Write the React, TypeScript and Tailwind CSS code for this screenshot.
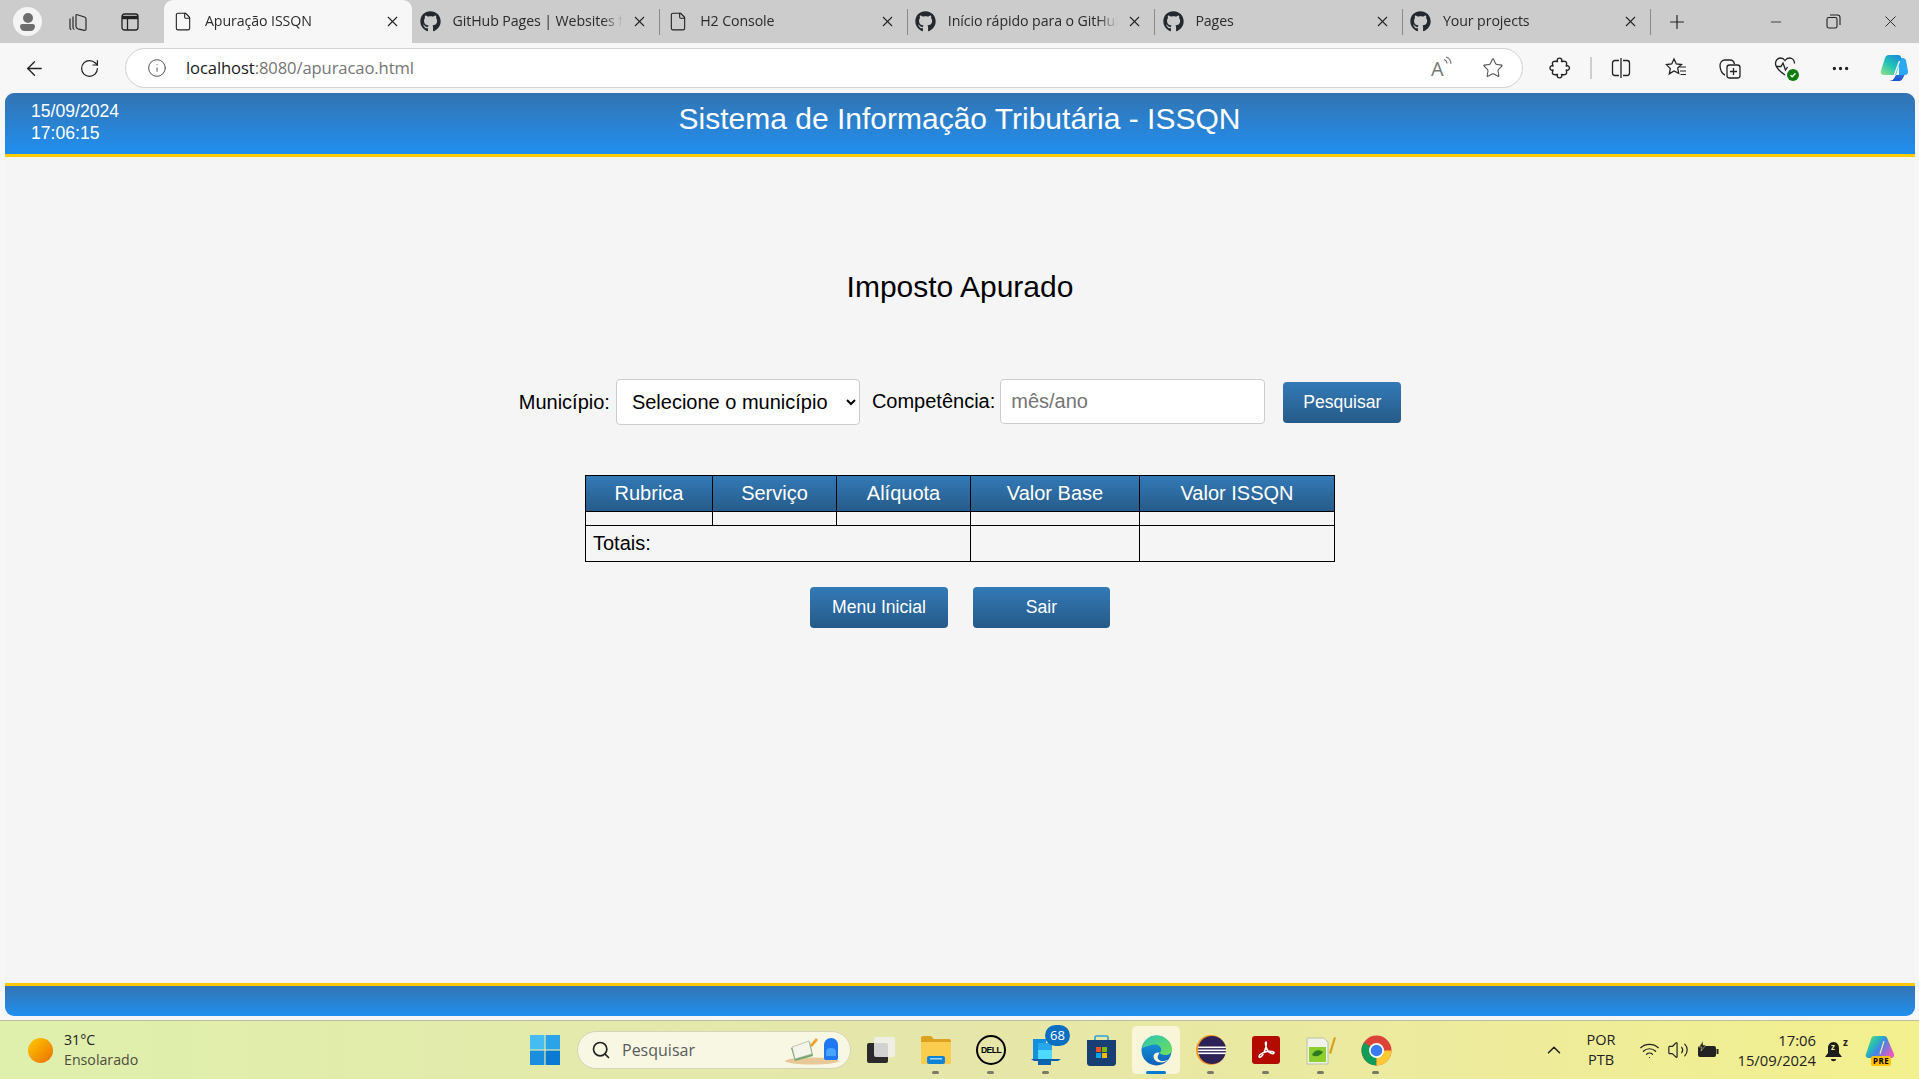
import { ArrowLeft, ChevronUp, File, Info, Minus, MoreHorizontal, Plus, RotateCw, Search, Star, Volume2, Wifi, X } from "lucide-react"
import { FaGithub } from "react-icons/fa"

const chromeFont = "font-['Open_Sans','Noto_Sans',sans-serif]"
const pageFont = "font-['Liberation_Sans',Arial,sans-serif]"

const tabs = [
    { title: "Apuração ISSQN", github: false, active: true },
    { title: "GitHub Pages | Websites for you and your projects", github: true },
    { title: "H2 Console", github: false },
    { title: "Início rápido para o GitHub Pages", github: true },
    { title: "Pages", github: true },
    { title: "Your projects", github: true },
]

function BrowserTab({ title, github, active }: { title: string; github: boolean; active?: boolean }) {
    return (
        <div className={`relative flex h-[43px] w-[247.6px] shrink-0 items-center pl-[8px] pr-[11px] ${active ? "rounded-t-[9px] bg-[#f7f7f7]" : ""}`}>
            <span className="flex w-[22px] shrink-0 justify-center">
                {github ? <FaGithub className="h-[21px] w-[21px] text-[#24292f]" /> : <File className="h-[23px] w-[20px] text-[#222]" strokeWidth={1.3} />}
            </span>
            <span className={`ml-[11px] min-w-0 flex-1 -translate-y-px overflow-hidden whitespace-nowrap text-[14.2px] leading-[18px] tracking-[-0.1px] text-[#2b2b2b] [mask-image:linear-gradient(to_right,black_88%,transparent)] ${chromeFont}`}>
                {title}
            </span>
            <X className="ml-[8px] h-[17px] w-[17px] shrink-0 text-[#222]" strokeWidth={1.5} />
            {!active && <span className="absolute right-[-1px] top-[9px] h-[26px] w-px bg-[#8a8a8a]" />}
        </div>
    )
}

function TabStrip() {
    return (
        <div className="flex h-[43px] items-center bg-[#cccccc]">
            <div className="flex w-[164px] shrink-0 items-center pl-[13px]">
                <div className="flex h-[29px] w-[29px] flex-col items-center justify-center rounded-full bg-[#f4f4f4]">
                    <span className="h-[10px] w-[10px] rounded-full bg-[#6d6d6d]" />
                    <span className="mt-[1px] h-[7px] w-[15px] rounded-b-[6px] rounded-t-[3px] bg-[#6d6d6d]" />
                </div>
                <svg className="ml-[25px] h-[22px] w-[22px]" viewBox="0 0 22 22" fill="none" stroke="#2a2a2a" strokeWidth="1.2">
                    <path d="M3 7.5v9.5c0 .8.5 1.3 1.2 1.6M6 5.5v11c0 1 .6 1.700 1.400 2M9.500 3.500l8 2.500c.8.300 1.500 1 1.500 2v10c0 1-.8 1.600-1.700 1.400l-6.400-1.600c-1-.3-1.900-1.100-1.900-2.300V4.400c0-.6.200-.9.500-.9z" />
                </svg>
                <svg className="ml-[31px] h-[20px] w-[20px]" viewBox="0 0 20 20" fill="none" stroke="#222" strokeWidth="1.3">
                    <rect x="2" y="2" width="16" height="16" rx="2.5" />
                    <path d="M2 5.5h16" strokeWidth="3.4" />
                    <path d="M7.5 6v12" />
                </svg>
            </div>
            {tabs.map((tab) => (
                <BrowserTab key={tab.title} title={tab.title} github={tab.github} active={tab.active} />
            ))}
            <Plus className="ml-[16px] h-[22px] w-[22px] text-[#222]" strokeWidth={1.3} />
            <Minus className="ml-[80px] h-[16px] w-[16px] text-[#222]" strokeWidth={1.2} />
            <svg className="ml-[42px] h-[15px] w-[15px]" viewBox="0 0 15 15" fill="none" stroke="#222" strokeWidth="1.1">
                <rect x="1" y="3.5" width="10" height="10.5" rx="1.8" />
                <path d="M4 1h7.5C13 1 14 2 14 3.500V11" />
            </svg>
            <X className="ml-[40px] h-[19px] w-[19px] text-[#222]" strokeWidth={1.15} />
        </div>
    )
}

function Toolbar() {
    return (
        <div className="flex h-[50px] items-center bg-[#f7f7f7]">
            <ArrowLeft className="ml-[23px] h-[23px] w-[23px] text-[#222]" strokeWidth={1.4} />
            <RotateCw className="ml-[33px] h-[21px] w-[21px] text-[#222]" strokeWidth={1.4} />
            <div className="ml-[25px] flex h-[40px] w-[1398px] items-center rounded-full border border-[#d2d2d2] bg-white">
                <Info className="ml-[21px] h-[20px] w-[20px] text-[#555]" strokeWidth={1.2} />
                <span className={`ml-[19px] flex-1 text-[16.6px] tracking-[-0.1px] text-[#767676] ${chromeFont}`}>
                    <span className="text-[#1a1a1a]">localhost</span>:8080/apuracao.html
                </span>
                <span className="relative mr-[28px] h-[24px] w-[24px]">
                    <span className={`absolute left-[1px] top-[2px] text-[20px] leading-[22px] text-[#777] ${chromeFont}`}>A</span>
                    <svg className="absolute left-[12px] top-0 h-[14px] w-[12px]" viewBox="0 0 12 14" fill="none" stroke="#777" strokeWidth="1.1">
                        <path d="M2 3.500c2 .8 3 2.200 3 4M4 1c3.200 1 5 3.500 5 7" />
                    </svg>
                </span>
                <Star className="mr-[18px] h-[22px] w-[22px] text-[#555]" strokeWidth={1.2} />
            </div>
            <div className="ml-[25px] flex items-center">
                <svg className="h-[24px] w-[24px]" viewBox="0 0 24 24" fill="none" stroke="#222" strokeWidth="1.4" strokeLinejoin="round">
                    <path d="M9.500 5.500C7.500 1 15.500 1 13.500 5.500C15 5.200 18 5 18.500 6.500C19 7.500 18.500 9 18.200 10C22.500 8.500 22.500 15.500 18.200 14C18.500 15 19 16.500 18.500 17.500C18 19 15 18.800 13.500 18.500C15.500 23 7.500 23 9.500 18.500C8 18.800 5 19 4.500 17.500C4 16.500 4.800 15 5 14C1 15.500 1 8.500 5 10C4.800 9 4 7.500 4.500 6.500C5 5 8 5.200 9.500 5.500z" />
                </svg>
                <span className="ml-[18px] h-[22px] w-[2px] bg-[#cfcfcf]" />
                <svg className="ml-[18px] h-[22px] w-[22px]" viewBox="0 0 22 22" fill="none" stroke="#222" strokeWidth="1.3">
                    <path d="M9 3.500H5c-1.500 0-2.500 1-2.500 2.500v10c0 1.500 1 2.500 2.500 2.500h4M13 3.500h4c1.500 0 2.500 1 2.500 2.500v10c0 1.500-1 2.500-2.500 2.500h-4M11 1v20" />
                </svg>
                <svg className="ml-[31px] h-[24px] w-[24px]" viewBox="0 0 24 24" fill="none" stroke="#222" strokeWidth="1.3">
                    <path d="M11 3l2.300 5 5.200.6-3.800 3.500 1 5.300L11 15l-4.700 2.900 1-5.300L3.500 8.600 8.700 8z" />
                    <path d="M16.500 11H23M17 15h6M17.500 18.500H23" strokeWidth="1.1" />
                </svg>
                <svg className="ml-[31px] h-[24px] w-[24px]" viewBox="0 0 24 24" fill="none" stroke="#222" strokeWidth="1.3">
                    <rect x="9" y="9" width="13" height="13" rx="2.500" />
                    <path d="M15.500 12v7M12 15.500h7" />
                    <path d="M7 19c-2-.5-3-2-4-4.500-.6-1.800-1-3.500-1-5 0-3 2-5.500 5-5.500h5c2 0 4 1.500 4.500 4" />
                </svg>
                <span className="relative ml-[32px] h-[24px] w-[24px]">
                    <svg className="h-[22px] w-[22px]" viewBox="0 0 22 22" fill="none" stroke="#222" strokeWidth="1.3">
                        <path d="M11 19C6 15.500 1.500 12 1.500 7.500 1.500 4 4 2 6.500 2 8.500 2 10 3 11 4.500 12 3 13.500 2 15.500 2 18 2 20.500 4 20.500 7.500" />
                        <path d="M2 10.500h5l2-3.500 2.500 7 2-3" />
                    </svg>
                    <span className="absolute bottom-[-1px] right-[-1px] flex h-[12px] w-[12px] items-center justify-center rounded-full bg-[#107c10]">
                        <svg className="h-[8px] w-[8px]" viewBox="0 0 8 8" fill="none" stroke="#fff" strokeWidth="1.3"><path d="M1.500 4.200l1.700 1.600L6.500 2.300" /></svg>
                    </span>
                </span>
                <MoreHorizontal className="ml-[32px] h-[21px] w-[21px] text-[#222]" strokeWidth={1.8} />
                <svg className="ml-[28px] h-[30px] w-[30px]" viewBox="0 0 30 30">
                    <defs>
                        <linearGradient id="cpA" x1="0.8" y1="0" x2="0.1" y2="1"><stop offset="0" stopColor="#1a8fd8" /><stop offset=".5" stopColor="#22c4b4" /><stop offset="1" stopColor="#8fe08a" /></linearGradient>
                        <linearGradient id="cpB" x1="0" y1="0" x2="0" y2="1"><stop offset="0" stopColor="#2a6fd8" /><stop offset="1" stopColor="#1b4fd0" /></linearGradient>
                    </defs>
                    <path d="M20 5h4c1.500 0 2.500 1 3 2.500L29 18c.5 2-.8 4-3 4h-6z" fill="#2aa8f0" />
                    <path d="M10 2h9c2.500 0 3.500 2 3 4l-5 16H5c-2.500 0-4-2-3-4.500L6 5c.6-2 2-3 4-3z" fill="url(#cpA)" />
                    <path d="M10 28h10c2.500 0 3.500-2 4.500-4l1-2H17l-2 3.500c-1 1.500-2.500 2.500-5 2.500z" fill="url(#cpB)" />
                    <path d="M20.500 8L15 23" stroke="#f7f7f7" strokeWidth="1.400" fill="none" />
                </svg>
            </div>
        </div>
    )
}

function BlueBar({ children, top }: { children?: React.ReactNode; top?: boolean }) {
    return (
        <div className={`flex bg-gradient-to-b from-[#3174b2] to-[#1e8ff0] ${top ? "h-[64px] rounded-t-[9px] border-b-[3px] border-[#ffcc00]" : "h-[33px] rounded-b-[9px] border-t-[3px] border-[#ffc800]"}`}>
            {children}
        </div>
    )
}

function ActionButton({ label, width }: { label: string; width: string }) {
    return (
        <button className={`h-[41px] rounded-[4px] bg-gradient-to-b from-[#337ab7] to-[#265a88] text-[17.6px] text-white ${width}`}>
            {label}
        </button>
    )
}

function Page() {
    const heads = [
        { label: "Rubrica", width: "w-[127px]" },
        { label: "Serviço", width: "w-[124px]" },
        { label: "Alíquota", width: "w-[134px]" },
        { label: "Valor Base", width: "w-[169px]" },
        { label: "Valor ISSQN", width: "w-[195px]" },
    ]

    return (
        <div className={`flex flex-1 flex-col bg-[#f7f7f7] pb-[4px] pl-[5px] pr-[4px] ${pageFont}`}>
            <div className="flex flex-1 flex-col bg-[#f5f5f5]">
                <BlueBar top>
                    <div className="w-[459px] shrink-0 pl-[26px] pt-[8px] text-[17.6px] leading-[21.5px] text-white">
                        <div>15/09/2024</div>
                        <div>17:06:15</div>
                    </div>
                    <div className="w-[991px] pt-[6px] text-center text-[30px] leading-[40px] text-white">
                        Sistema de Informação Tributária - ISSQN
                    </div>
                </BlueBar>

                <main className="flex flex-1 flex-col items-center">
                    <h1 className="mt-[110px] text-[30px] leading-[40px] text-black">Imposto Apurado</h1>

                    <div className="mt-[72px] flex items-center text-[20px] text-black">
                        <label>Município:</label>
                        <select className="ml-[6px] h-[46px] w-[244px] rounded-[4px] border border-[#cccccc] bg-white pl-[11px] text-[20px]">
                            <option>Selecione o município</option>
                        </select>
                        <label className="ml-[12px] -translate-y-px">Competência:</label>
                        <input
                            placeholder="mês/ano"
                            className="ml-[5px] h-[45px] w-[265px] -translate-y-px rounded-[4px] border border-[#cccccc] bg-white px-[10px] text-[20px] placeholder:text-[#757575]"
                        />
                        <span className="ml-[18px]"><ActionButton label="Pesquisar" width="w-[118px]" /></span>
                    </div>

                    <table className="mt-[50px] w-[749px] table-fixed border-collapse border border-black text-[20px] leading-[26px] text-black">
                        <thead>
                            <tr className="h-[36px] bg-gradient-to-b from-[#337ab7] to-[#265a88] text-white">
                                {heads.map((h) => (
                                    <th key={h.label} className={`border border-black pb-[2px] font-normal ${h.width}`}>{h.label}</th>
                                ))}
                            </tr>
                        </thead>
                        <tbody>
                            <tr className="h-[14px]">
                                <td className="border border-black" />
                                <td className="border border-black" />
                                <td className="border border-black" />
                                <td className="border border-black" />
                                <td className="border border-black" />
                            </tr>
                            <tr className="h-[36px]">
                                <td colSpan={3} className="border border-black px-[7px] pb-[2px]">Totais:</td>
                                <td className="border border-black" />
                                <td className="border border-black" />
                            </tr>
                        </tbody>
                    </table>

                    <div className="mt-[25px] flex gap-[25px]">
                        <ActionButton label="Menu Inicial" width="w-[138px]" />
                        <ActionButton label="Sair" width="w-[137px]" />
                    </div>
                </main>

                <BlueBar />
            </div>
        </div>
    )
}

function TaskIcon({ children, running, active }: { children: React.ReactNode; running?: boolean; active?: boolean }) {
    return (
        <div className={`relative flex h-[48px] w-[48px] items-center justify-center rounded-[5px] ${active ? "bg-[#f8f5d8]" : ""}`}>
            {children}
            {running && <span className="absolute bottom-[0px] left-[20px] h-[3px] w-[7px] rounded-full bg-[#7a7a6a]" />}
            {active && <span className="absolute bottom-[0px] left-[14px] h-[3px] w-[20px] rounded-full bg-[#0b78d4]" />}
        </div>
    )
}

function Taskbar() {
    return (
        <div className={`flex h-[59px] items-center border-t border-[#bdbda0] bg-gradient-to-r from-[#dff0ac] via-[#e6e6aa] to-[#f3f08e] ${chromeFont}`}>
            <div className="flex w-[530px] shrink-0 items-center pl-[28px]">
                <span className="h-[25px] w-[25px] rounded-full bg-gradient-to-br from-[#ffcc00] to-[#e86c00]" />
                <div className="ml-[11px] text-[14.200px] leading-[20px]">
                    <div className="text-[#222]">31°C</div>
                    <div className="text-[#4c4c3c]">Ensolarado</div>
                </div>
            </div>

            <svg className="h-[30px] w-[30px] shrink-0" viewBox="0 0 30 30">
                <rect x="0" y="0" width="14.400" height="14.400" fill="#45bdf2" />
                <rect x="15.600" y="0" width="14.400" height="14.400" fill="#2ba3e8" />
                <rect x="0" y="15.600" width="14.400" height="14.400" fill="#1a8fe0" />
                <rect x="15.600" y="15.600" width="14.400" height="14.400" fill="#0a7ad2" />
            </svg>

            <div className="ml-[17px] flex h-[38px] w-[274px] shrink-0 items-center rounded-full border border-[#d4d4b8] bg-[#f8f7e4] pl-[13px]">
                <Search className="h-[20px] w-[20px] text-[#222]" strokeWidth={2} />
                <span className="ml-[11px] flex-1 text-[16px] text-[#5a5a5a]">Pesquisar</span>
                <svg className="mr-[8px] h-[32px] w-[58px]" viewBox="0 0 58 32">
                    <ellipse cx="28" cy="27" rx="27" ry="3.500" fill="#e8c898" />
                    <path d="M7 14l19-6 3 14-18 5z" fill="#6fa86a" />
                    <path d="M8 13l17-6 3 13-17 5z" fill="#f4f4ea" stroke="#9aa58c" strokeWidth=".6" />
                    <path d="M26 11l6-7 2 2-6 7z" fill="#f0a030" />
                    <path d="M40 24V11c0-4 3-7 7-7s7 3 7 7v13c0 1.500-1 2-2 2H42c-1 0-2-.5-2-2z" fill="#1f78f0" />
                    <path d="M42 19c0-4 2-5 5-5s5 1 5 5v3H42z" fill="#4aa4ff" />
                </svg>
            </div>

            <div className="ml-[6px] flex shrink-0 items-center gap-[7px]">
                <TaskIcon>
                    <span className="relative block h-[26px] w-[28px]">
                        <span className="absolute bottom-0 left-0 h-[20px] w-[21px] rounded-[2px] bg-[#2a2a2a]" />
                        <span className="absolute right-0 top-0 h-[20px] w-[21px] rounded-[2px] bg-[#f0f0f0]/85" />
                    </span>
                </TaskIcon>
                <TaskIcon running>
                    <svg className="h-[28px] w-[30px]" viewBox="0 0 30 28">
                        <path d="M0 2c0-1 .7-2 2-2h8l3 3h15c1 0 2 .7 2 2v3H0z" fill="#dca320" />
                        <rect x="0" y="6" width="30" height="22" fill="#fbcd4e" />
                        <rect x="6" y="20" width="18" height="8" rx="2" fill="#0f84d4" />
                        <rect x="9" y="22" width="12" height="1.500" fill="#a8d8f4" />
                    </svg>
                </TaskIcon>
                <TaskIcon running>
                    <span className="flex h-[30px] w-[30px] items-center justify-center rounded-full border-[2.5px] border-black font-['Liberation_Sans',sans-serif] text-[8.5px] font-bold tracking-[-0.5px] text-black">
                        DELL
                    </span>
                </TaskIcon>
                <TaskIcon running>
                    <svg className="h-[29px] w-[30px]" viewBox="0 0 30 29">
                        <rect x="2" y="3" width="13" height="20" fill="#1490df" />
                        <rect x="7" y="7" width="14" height="16" fill="#28a8ea" />
                        <rect x="7" y="14" width="14" height="9" fill="#50d9ff" />
                        <path d="M0 23h30l-3 2H3z" fill="#0a5da8" />
                        <rect x="7" y="24" width="13" height="5" fill="#0a64ad" />
                    </svg>
                    <span className="absolute right-[0px] top-[-1px] flex h-[21px] w-[25px] items-center justify-center rounded-full bg-[#0b6fc2] text-[13px] leading-none text-white">68</span>
                </TaskIcon>
                <TaskIcon>
                    <svg className="h-[31px] w-[29px]" viewBox="0 0 29 31">
                        <path d="M8 6V2.500C8 1.500 8.500 1 9.500 1h10c1 0 1.500.5 1.500 1.500V6" fill="none" stroke="#2ba0d8" strokeWidth="1.600" />
                        <path d="M0 5h29v23c0 1.500-1 3-3 3H3c-2 0-3-1.500-3-3z" fill="#173f73" />
                        <rect x="9" y="12" width="5" height="5" fill="#f25022" />
                        <rect x="15" y="12" width="5" height="5" fill="#7fba00" />
                        <rect x="9" y="18" width="5" height="5" fill="#00a4ef" />
                        <rect x="15" y="18" width="5" height="5" fill="#ffb900" />
                    </svg>
                </TaskIcon>
                <TaskIcon active>
                    <svg className="h-[31px] w-[31px]" viewBox="0 0 31 31">
                        <defs>
                            <linearGradient id="edgeA" x1="0" y1="0" x2="1" y2="1"><stop offset="0" stopColor="#2cc4b0" /><stop offset="1" stopColor="#6fe05a" /></linearGradient>
                            <linearGradient id="edgeB" x1="0" y1="0" x2="0" y2="1"><stop offset="0" stopColor="#1aa0e0" /><stop offset="1" stopColor="#0c60b8" /></linearGradient>
                        </defs>
                        <circle cx="15.500" cy="15.500" r="15" fill="url(#edgeB)" />
                        <path d="M1 13C3 5 9 .5 15.500 .5 24 .5 31 7 31 14c0 4-3 6-7 6-3 0-5-1-5.500-2.500 1.500-1 2-2.500 1.500-4-1-3-4-4.500-7-4-5 .8-9 3-12.500 3.500z" fill="url(#edgeA)" />
                        <path d="M18.500 17.500c-3-.5-6 1-6 4 0 3 3 6 8 6 2.500 0 5-1 7-3-3 1.500-6 2-8.500 1-2-1-3-3-2-5 .5-1 1-2 1.500-3z" fill="#f8f5d8" />
                    </svg>
                </TaskIcon>
                <TaskIcon running>
                    <svg className="h-[30px] w-[30px]" viewBox="0 0 30 30">
                        <circle cx="15" cy="15" r="15" fill="#f7941e" />
                        <circle cx="16" cy="15" r="14" fill="#2c2255" />
                        <rect x="2" y="11.500" width="28" height="1.600" fill="#fff" />
                        <rect x="2" y="14.500" width="28" height="1.600" fill="#fff" />
                        <rect x="2" y="17.500" width="28" height="1.600" fill="#fff" />
                    </svg>
                </TaskIcon>
                <TaskIcon running>
                    <span className="flex h-[28px] w-[28px] items-center justify-center rounded-[3px] bg-[#b30b00]">
                        <svg className="h-[20px] w-[20px]" viewBox="0 0 20 20" fill="none" stroke="#fff" strokeWidth="1.500">
                            <path d="M10 2c-1.500 0 0 6 2 9 1.500 2 5 3.500 6 2 .7-1.500-4-2-7-1.500-3 .5-8 3-8 5 0 2 3 .5 5-4 1-2.500 3-9 2-10.500z" />
                        </svg>
                    </span>
                </TaskIcon>
                <TaskIcon running>
                    <svg className="h-[30px] w-[30px]" viewBox="0 0 30 30">
                        <path d="M1 3h17l4 4v22H1z" fill="#f0f4e8" stroke="#b8c0a8" />
                        <rect x="3" y="12" width="17" height="15" fill="#8ccf2e" />
                        <path d="M6 20c2-5 7-6 11-3-2 3-7 6-11 3z" fill="#2f7a20" />
                        <path d="M23 18L28 2l2 .8L25 19z" fill="#d8a020" />
                    </svg>
                </TaskIcon>
                <TaskIcon running>
                    <svg className="h-[31px] w-[31px]" viewBox="0 0 31 31">
                        <circle cx="15.500" cy="15.500" r="15" fill="#db4437" />
                        <path d="M15.500 15.500L2.500 23C5 27.500 10 30.500 15.500 30.500z" fill="#0f9d58" />
                        <path d="M2.500 23A15 15 0 0 1 3 7.500L15.500 15.500z" fill="#0f9d58" />
                        <path d="M15.500 15.500h15A15 15 0 0 1 15.500 30.500z" fill="#fcc934" />
                        <circle cx="15.500" cy="15.500" r="7.500" fill="#fff" />
                        <circle cx="15.500" cy="15.500" r="5.800" fill="#3a7bef" />
                    </svg>
                </TaskIcon>
            </div>

            <div className="ml-auto flex shrink-0 items-center pr-[24px]">
                <ChevronUp className="h-[22px] w-[22px] text-[#222]" strokeWidth={1.7} />
                <div className="ml-[9px] w-[54px] text-center text-[14.500px] leading-[20px] text-[#222]">
                    <div>POR</div>
                    <div>PTB</div>
                </div>
                <Wifi className="ml-[11px] h-[21px] w-[21px] text-[#222]" strokeWidth={1.4} />
                <Volume2 className="ml-[7px] h-[22px] w-[22px] text-[#222]" strokeWidth={1.3} />
                <svg className="ml-[8px] h-[18px] w-[22px]" viewBox="0 0 22 18">
                    <rect x="1" y="5" width="18" height="11" rx="2" fill="#222" />
                    <rect x="19.500" y="8" width="2" height="5" fill="#222" />
                    <path d="M6 0L2 6h3l-1 4 5-6H6z" fill="#222" stroke="#ecef9c" strokeWidth=".5" />
                </svg>
                <div className="ml-[10px] w-[87px] text-right text-[14.800px] leading-[20px] text-[#222]">
                    <div>17:06</div>
                    <div>15/09/2024</div>
                </div>
                <span className="relative ml-[9px] block h-[24px] w-[20px]">
                    <svg className="absolute left-0 top-[4px] h-[20px] w-[17px]" viewBox="0 0 17 20">
                        <path d="M8.500 0C12 0 14 3 14 6v5l3 4H0l3-4V6c0-3 2-6 5.500-6z" fill="#1c1c1c" />
                        <path d="M6 17h5c0 3-5 3-5 0z" fill="#1c1c1c" />
                    </svg>
                    <span className="absolute left-[6px] top-[5px] text-[8px] font-bold leading-none text-[#f0ef9c]">z</span>
                    <span className="absolute right-[-3px] top-[-1px] text-[10px] font-bold leading-none text-[#222]">z</span>
                </span>
                <span className="relative ml-[20px] block h-[30px] w-[30px]">
                    <svg className="h-[27px] w-[30px]" viewBox="0 0 30 27">
                        <defs>
                            <linearGradient id="cp2" x1="0" y1="0" x2="1" y2="0.6"><stop offset="0" stopColor="#8fd85a" /><stop offset=".35" stopColor="#26c0b0" /><stop offset=".6" stopColor="#3f86ea" /><stop offset="1" stopColor="#e45ac0" /></linearGradient>
                        </defs>
                        <path d="M9 1h10c2 0 3 1 3.500 3L29 19c.6 2-.6 4-3 4H4c-2.500 0-4-2-3-4L6 4c.6-2 1.500-3 3-3z" fill="url(#cp2)" />
                        <path d="M19 6l-4 13" stroke="#f0ee9c" strokeWidth="1.200" fill="none" />
                    </svg>
                    <span className="absolute bottom-[-1px] left-[6px] rounded-[2px] bg-[#ffc000] px-[2px] text-[8px] font-bold leading-[10px] tracking-[0.5px] text-black">PRE</span>
                </span>
            </div>
        </div>
    )
}

export default function App() {
    return (
        <div className="flex h-[1079px] w-[1919px] flex-col overflow-hidden">
            <TabStrip />
            <Toolbar />
            <Page />
            <Taskbar />
        </div>
    )
}
